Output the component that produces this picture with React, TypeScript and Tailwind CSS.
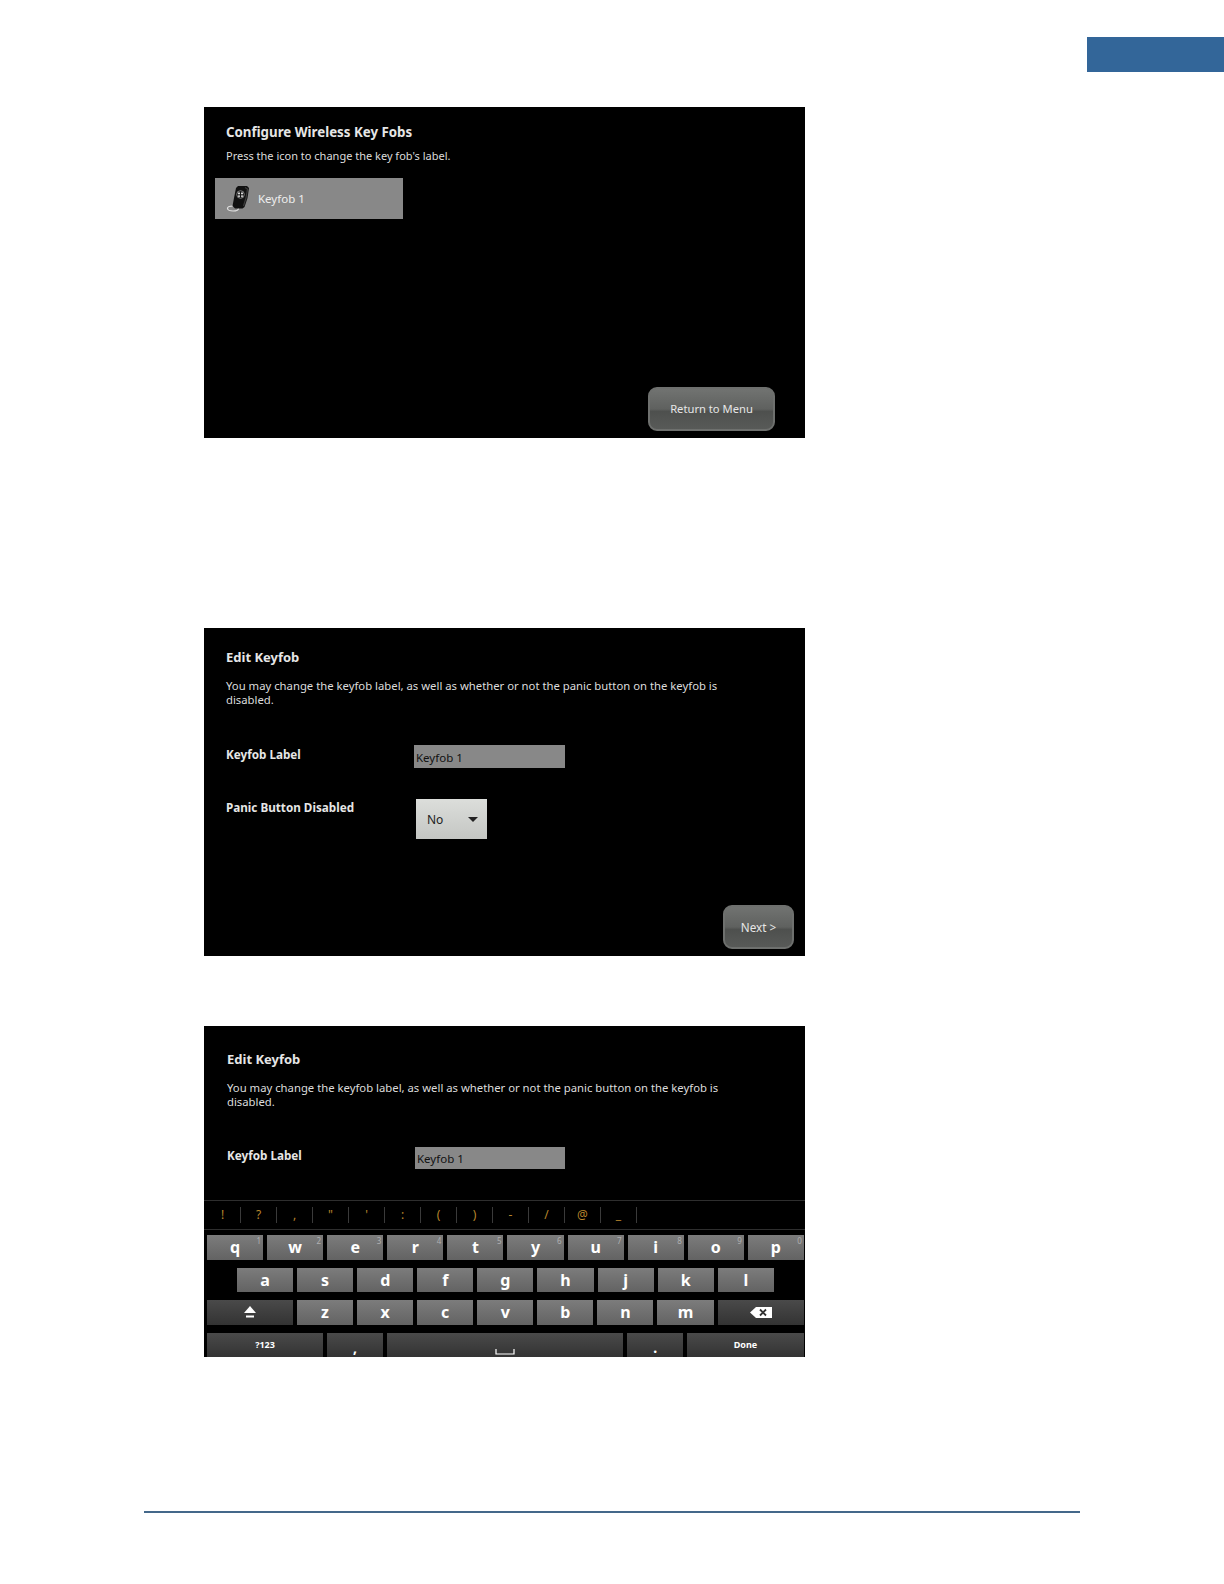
const font = "font-['Noto_Sans','Open_Sans',sans-serif]";

function GlossButton({ label, className }: { label: string; className: string }) {
  return (
    <div className={`flex items-center justify-center rounded-[9px] border-2 border-[#6e706e] bg-[linear-gradient(#717371_0%,#5f615f_50%,#4e504e_56%,#585a58_100%)] text-[#e6e6e6] ${className}`}>
      {label}
    </div>
  );
}

function KeyfobIcon() {
  return (
    <svg width="24" height="27" viewBox="0 0 24 27" className="shrink-0">
      <ellipse cx="7" cy="23.500" rx="5.500" ry="2.500" fill="none" stroke="#e0e0e0" strokeWidth="1.200" />
      <path d="M10 3 12 1h9l2 2-1.500 10-3 9-2 1.500H9L6.500 21l1.500-8z" fill="#111" />
      <path d="M19 2.500 21.500 4 20 13l-2.500 8" fill="none" stroke="#3c3c3c" strokeWidth="1.200" />
      <circle cx="14.500" cy="9.500" r="3.800" fill="none" stroke="#7c7c7c" strokeWidth="1" />
      <rect x="12" y="7.500" width="2" height="1.800" fill="#d8d8d8" />
      <rect x="15" y="7.500" width="2" height="1.800" fill="#d8d8d8" />
      <rect x="12" y="10.300" width="2" height="1.800" fill="#bdbdbd" />
      <rect x="15" y="10.300" width="2" height="1.800" fill="#bdbdbd" />
    </svg>
  );
}

function TextInput({ className }: { className: string }) {
  return <div className={`flex items-center bg-[#888888] pl-[2px] pt-[2px] text-[11.500px] text-[#111] ${className}`}>Keyfob 1</div>;
}

function Key({ label, hint, dark, className }: { label: React.ReactNode; hint?: string; dark?: boolean; className: string }) {
  return (
    <div className={`relative flex h-[24.500px] items-center justify-center font-bold text-white ${dark ? "bg-gradient-to-b from-[#4a4a4a] to-[#333333]" : "bg-gradient-to-b from-[#7c7c7c] to-[#636363]"} ${className}`}>
      {label}
      {hint && <span className="absolute right-[2px] top-0 text-[8px] font-normal leading-[11px] text-[#b0b0b0]">{hint}</span>}
    </div>
  );
}

function Keyboard() {
  const letter = "w-[56.100px] text-[16px]";
  const symbols = ["!", "?", ",", '"', "'", ":", "(", ")", "-", "/", "@", "_"];
  return (
    <div className="overflow-hidden">
      <div className="flex h-[30px] items-center border-y border-[#2e2e2e] pl-[1px]">
        {symbols.map((s) => (
          <div key={s} className="flex h-[16px] w-[36px] items-center justify-center border-r border-[#3a3a3a] text-[12px] text-[#b8862c]">
            {s}
          </div>
        ))}
      </div>
      <div className="flex flex-col gap-[8px] pl-[3px] pr-[1px] pt-[5px]">
        <div className="flex gap-[4px]">
          {["q", "w", "e", "r", "t", "y", "u", "i", "o", "p"].map((k, i) => (
            <Key key={k} label={k} hint={String((i + 1) % 10)} className={letter} />
          ))}
        </div>
        <div className="flex gap-[4px] pl-[30px]">
          {["a", "s", "d", "f", "g", "h", "j", "k", "l"].map((k) => (
            <Key key={k} label={k} className={letter} />
          ))}
        </div>
        <div className="flex gap-[4px]">
          <Key
            dark
            className="w-[86px]"
            label={
              <svg width="14" height="14" viewBox="0 0 14 14">
                <path d="M7 1 13 8H1z" fill="#fff" />
                <rect x="3" y="10.500" width="8" height="2" fill="#fff" />
              </svg>
            }
          />
          {["z", "x", "c", "v", "b", "n", "m"].map((k) => (
            <Key key={k} label={k} className={letter} />
          ))}
          <Key
            dark
            className="w-[86.500px]"
            label={
              <svg width="22" height="11" viewBox="0 0 22 11">
                <path d="M6 0h16v11H6L0 5.500z" fill="#fff" />
                <path d="M10 2.500l6 6m0-6l-6 6" stroke="#333" strokeWidth="1.800" />
              </svg>
            }
          />
        </div>
        <div className="flex gap-[4px]">
          <Key dark className="w-[116px] text-[9px]" label="?123" />
          <Key dark className={letter} label={<span className="pt-[6px] text-[14px]">,</span>} />
          <Key
            dark
            className="w-[236px]"
            label={
              <svg width="20" height="6" viewBox="0 0 20 6" className="mt-[14px]">
                <path d="M1 0v5h18V0" fill="none" stroke="#fff" strokeWidth="1.200" />
              </svg>
            }
          />
          <Key dark className={letter} label={<span className="pt-[6px] text-[14px]">.</span>} />
          <Key dark className="w-[116.500px] text-[9px]" label="Done" />
        </div>
      </div>
    </div>
  );
}

function Intro() {
  return (
    <>
      <h2 className="text-[13px] font-bold leading-[18px] text-[#e6e6e6]">Edit Keyfob</h2>
      <p className="mt-[13px] w-[510px] text-[11.300px] leading-[14px] text-[#dcdcdc]">
        You may change the keyfob label, as well as whether or not the panic button on the keyfob is disabled.
      </p>
    </>
  );
}

export default function App() {
  return (
    <div className={`flex h-[1584px] w-[1224px] flex-col bg-white ${font}`}>
      <div className="mt-[37px] h-[35px] w-[137px] self-end bg-[#336699]" />

      {/* first screen */}
      <section className="ml-[204px] mt-[35px] flex h-[331px] w-[601px] flex-col bg-black">
        <div className="px-[22px] pt-[16px]">
          <h2 className="text-[13.300px] font-bold leading-[18px] text-[#e6e6e6]">Configure Wireless Key Fobs</h2>
          <p className="mt-[8px] text-[11px] leading-[14px] text-[#dcdcdc]">Press the icon to change the key fob's label.</p>
        </div>
        <div className="ml-[11px] mt-[15px] flex h-[41px] w-[188px] items-center gap-[8px] bg-[#888888] pl-[11px] text-[11.500px] text-[#eeeeee]">
          <KeyfobIcon />
          Keyfob 1
        </div>
        <GlossButton label="Return to Menu" className="mb-[7px] mr-[30px] mt-auto h-[44px] w-[127px] self-end text-[11.200px]" />
      </section>

      {/* edit screen */}
      <section className="ml-[204px] mt-[190px] flex h-[328px] w-[601px] flex-col bg-black">
        <div className="px-[22px] pt-[20px]">
          <Intro />
          <div className="mt-[38px] flex h-[23px]">
            <div className="w-[188px] pt-[1px] text-[11.700px] font-bold leading-[16px] text-[#e6e6e6]">Keyfob Label</div>
            <TextInput className="w-[151px]" />
          </div>
          <div className="mt-[31px] flex">
            <div className="w-[190px] text-[11.700px] font-bold leading-[16px] text-[#e6e6e6]">Panic Button Disabled</div>
            <div className="flex h-[40px] w-[71px] items-center justify-between bg-gradient-to-b from-[#dcdedb] to-[#c4c6c3] pl-[11px] pr-[9px] pt-[1px] text-[12px] text-[#222]">
              No
              <svg width="10" height="5" viewBox="0 0 10 5">
                <path d="M0 0h10L5 5z" fill="#222" />
              </svg>
            </div>
          </div>
        </div>
        <GlossButton label="Next >" className="mb-[7px] mr-[11px] mt-auto h-[44px] w-[71px] self-end pt-[1px] text-[11.700px]" />
      </section>

      {/* edit screen with keyboard */}
      <section className="ml-[204px] mt-[70px] flex h-[331px] w-[601px] flex-col overflow-hidden bg-black">
        <div className="px-[23px] pt-[24px]">
          <Intro />
          <div className="mt-[38px] flex h-[22px]">
            <div className="w-[188px] text-[11.700px] font-bold leading-[16px] text-[#e6e6e6]">Keyfob Label</div>
            <TextInput className="w-[150px]" />
          </div>
        </div>
        <div className="mt-[31px]">
          <Keyboard />
        </div>
      </section>

      <div className="ml-[144px] mt-[154px] h-[1.500px] w-[936px] bg-[#44688a]" />
    </div>
  );
}
